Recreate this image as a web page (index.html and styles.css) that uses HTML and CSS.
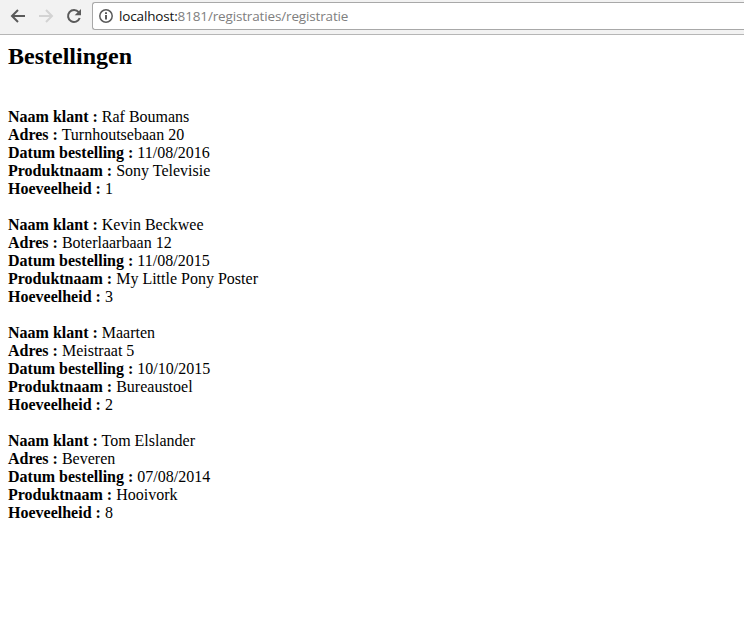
FILE: index.html
```html
<!DOCTYPE html>
<html lang="nl">
<head>
<meta charset="utf-8">
<title>Bestellingen</title>
<link rel="stylesheet" href="styles.css">
</head>
<body>
<header class="toolbar">
  <svg class="icon" viewBox="0 0 16 16"><path d="M15 8H2.500M8 2L2 8l6 6"/></svg>
  <svg class="icon forward" viewBox="0 0 16 16"><path d="M1 8h12.500M8 2l6 6l-6 6"/></svg>
  <svg class="icon reload" viewBox="0 0 16 16"><path d="M12.700 4.200A6 6 0 1 0 13.700 10"/><path class="solid" d="M15 1v6.300H8.700z"/></svg>
  <div class="address">
    <svg class="info" viewBox="0 0 14 14"><circle cx="7" cy="7" r="6.200"/><path class="stem" d="M7 6v4.500M7 3.300v1.700"/></svg>
    <span class="url"><span class="host">localhost:</span>8181/registraties/registratie</span>
  </div>
</header>
<main>
  <h1>Bestellingen</h1>
  <p class="order"><b>Naam klant :</b> Raf Boumans<br><b>Adres :</b> Turnhoutsebaan 20<br><b>Datum bestelling :</b> 11/08/2016<br><b>Produktnaam :</b> Sony Televisie<br><b>Hoeveelheid :</b> 1</p>
  <p class="order"><b>Naam klant :</b> Kevin Beckwee<br><b>Adres :</b> Boterlaarbaan 12<br><b>Datum bestelling :</b> 11/08/2015<br><b>Produktnaam :</b> My Little Pony Poster<br><b>Hoeveelheid :</b> 3</p>
  <p class="order"><b>Naam klant :</b> Maarten<br><b>Adres :</b> Meistraat 5<br><b>Datum bestelling :</b> 10/10/2015<br><b>Produktnaam :</b> Bureaustoel<br><b>Hoeveelheid :</b> 2</p>
  <p class="order"><b>Naam klant :</b> Tom Elslander<br><b>Adres :</b> Beveren<br><b>Datum bestelling :</b> 07/08/2014<br><b>Produktnaam :</b> Hooivork<br><b>Hoeveelheid :</b> 8</p>
</main>
</body>
</html>
```
FILE: styles.css
```css
* { box-sizing: border-box; }
body { margin: 0; background: #fff; color: #000; font: 16px/18px "Liberation Serif", serif; overflow: hidden; }
.toolbar { display: flex; align-items: flex-start; height: 35px; background: #f2f2f2; border-bottom: 1px solid #b6b6b6; padding-left: 10px; }
.icon { width: 16px; height: 16px; margin-top: 8px; margin-right: 12px; fill: none; stroke: #5a5a5a; stroke-width: 2; flex: none; }
.forward { stroke: #d3d3d3; }
.reload { margin-right: 10px; }
.solid { fill: #5a5a5a; stroke: none; }
.address { flex: 1; display: flex; align-items: center; height: 28px; margin-top: 2px; padding-left: 6px; background: #fff; border: 1px solid #a8a8a8; border-right: 0; border-radius: 3px 0 0 3px; }
.info { width: 14px; height: 14px; fill: none; stroke: #5a5a5a; stroke-width: 1.5; margin-right: 6px; }
.stem { stroke-width: 2; }
.url { font: 13.5px/18px "Open Sans", sans-serif; letter-spacing: -0.15px; color: #808080; }
.host { color: #111; }
main { padding: 7px 8px; }
h1 { font-size: 24px; line-height: 28px; margin: 0 0 38px; }
.order { margin: 0 0 18px; }
```
